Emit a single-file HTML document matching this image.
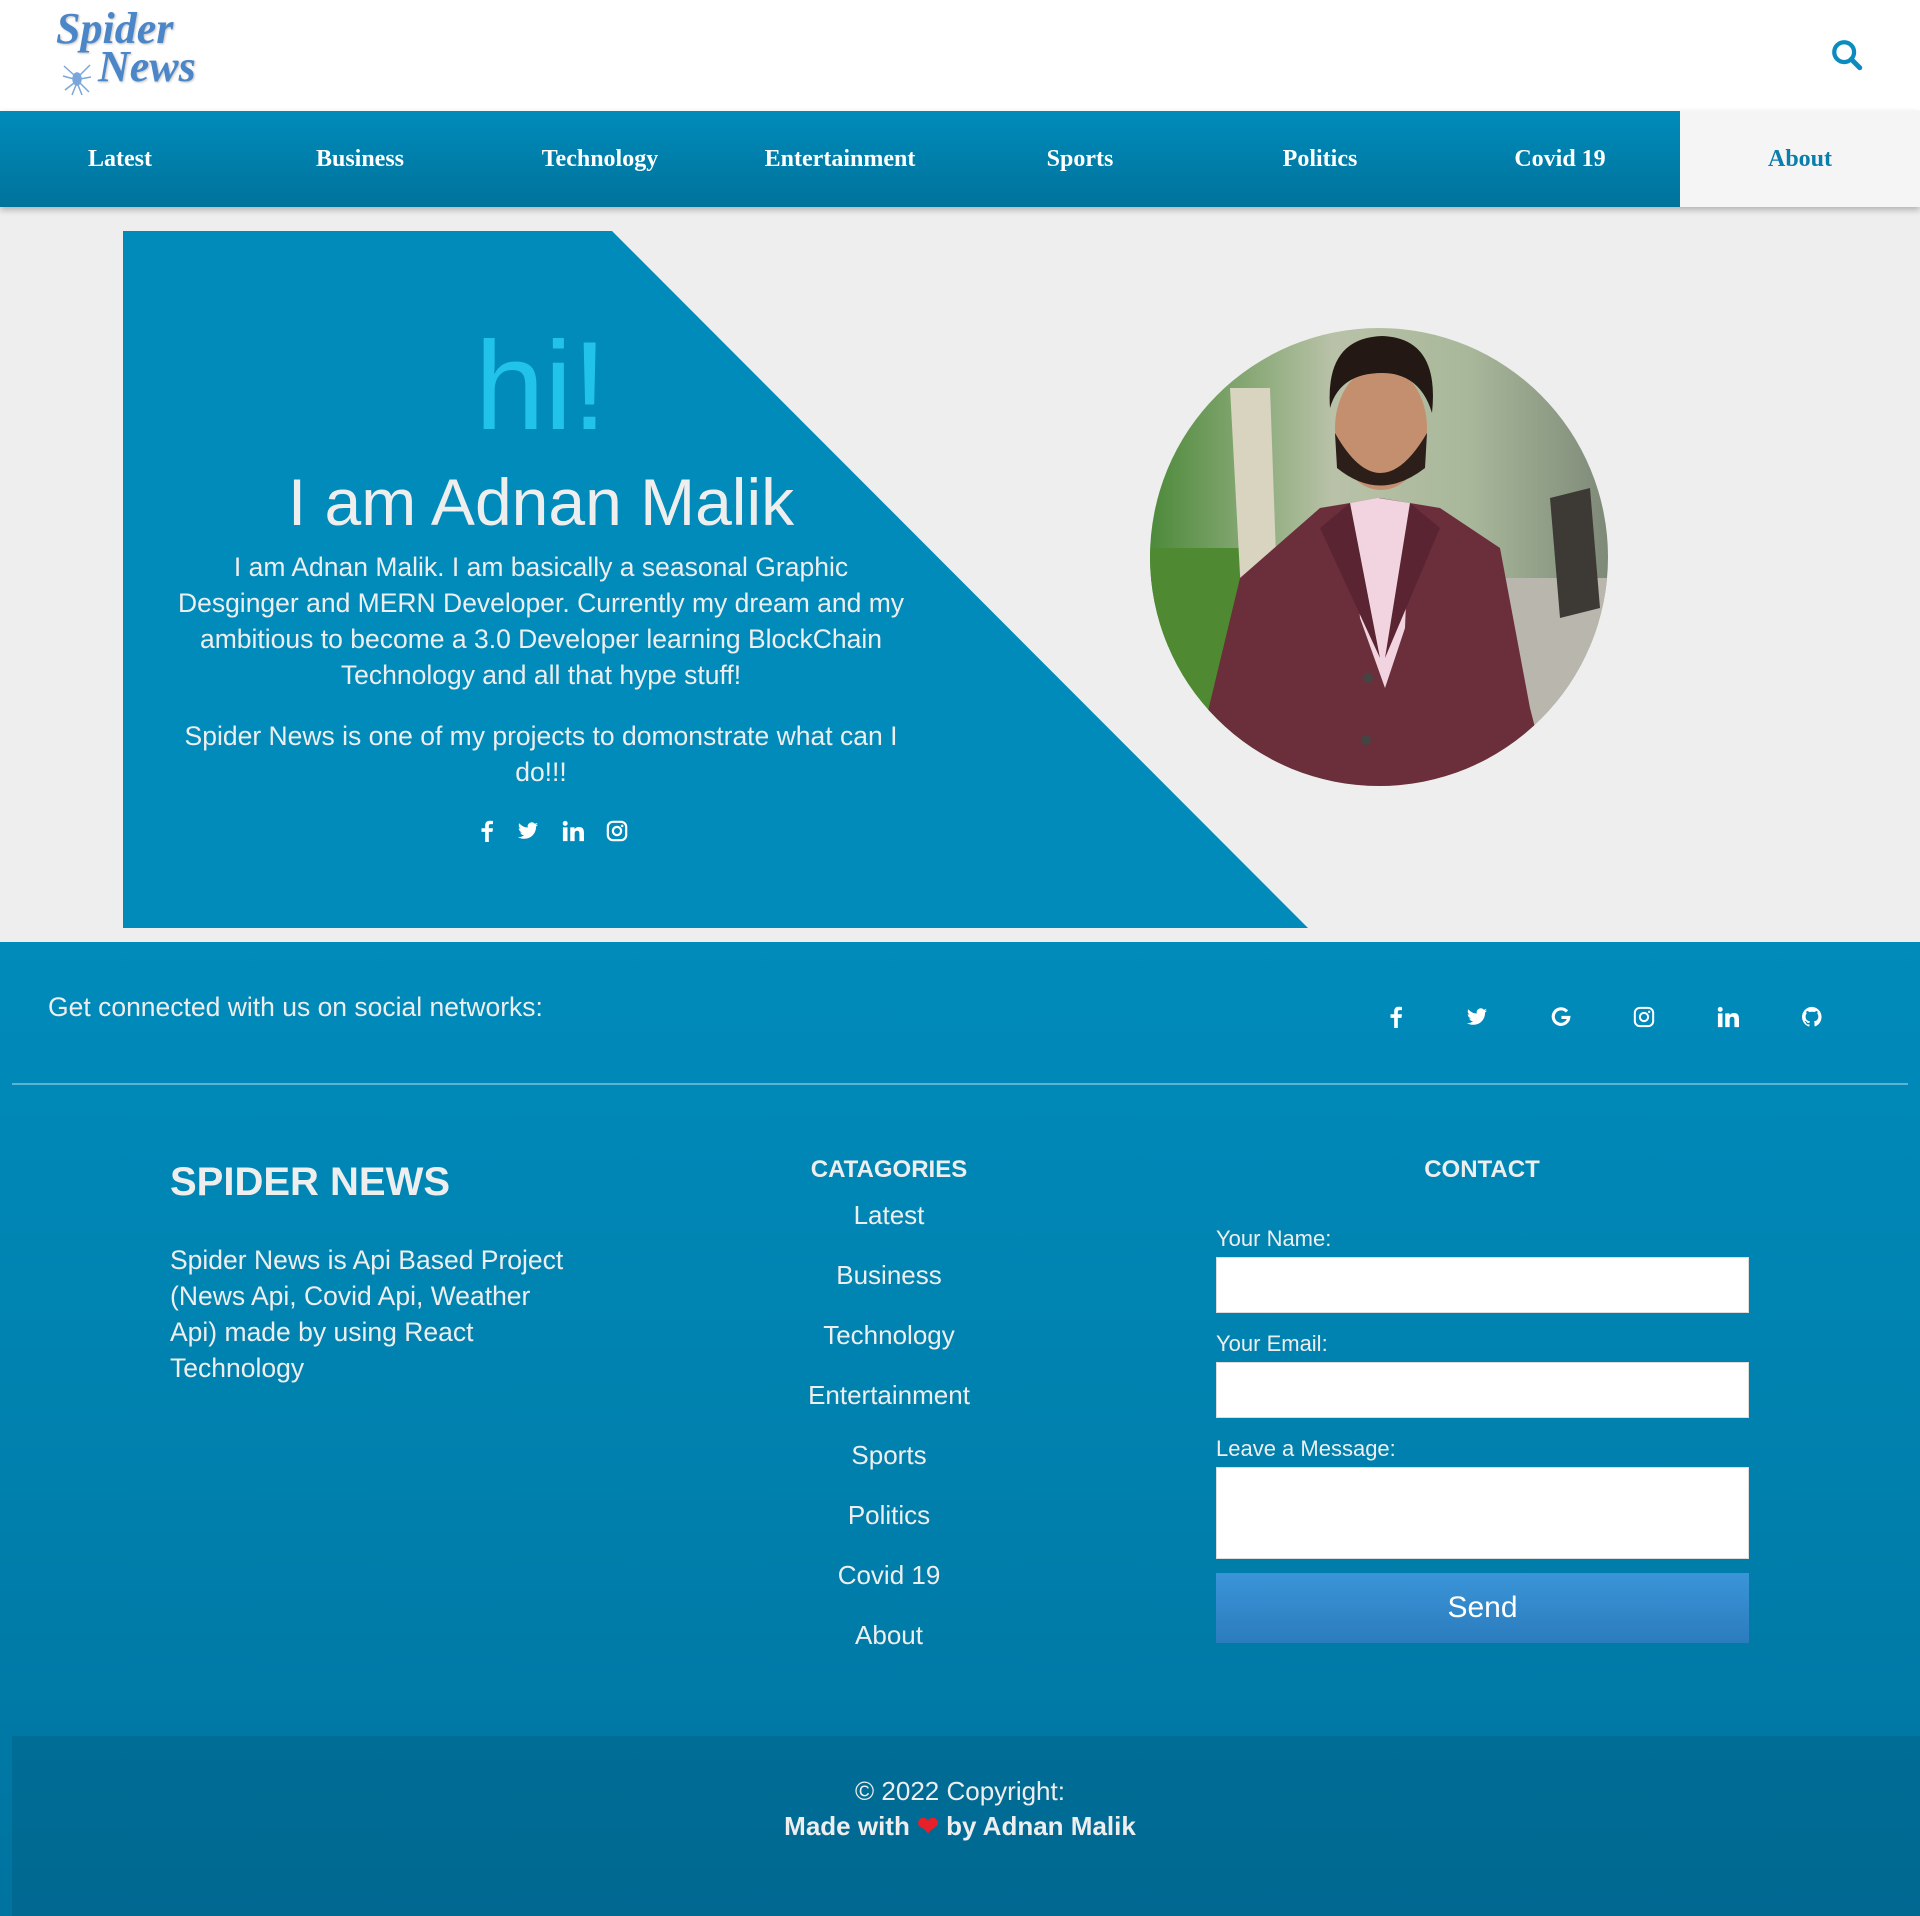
<!DOCTYPE html>
<html><head><meta charset="utf-8"><style>
*{margin:0;padding:0;box-sizing:border-box}
body{width:1920px;height:1916px;position:relative;background:#eee;font-family:"Liberation Sans",sans-serif;overflow:hidden}
.a{position:absolute}
.nav{top:111px;left:0;width:1920px;height:96px;background:linear-gradient(#008bbb,#00739b);box-shadow:0 3px 6px rgba(0,0,0,.25)}
.nav div{position:absolute;top:0;width:240px;height:96px;line-height:96px;text-align:center;color:#fff;font-family:"Liberation Serif",serif;font-weight:bold;font-size:24px}
.c{text-align:center}
.w{color:#eee}
svg.i{position:absolute}
</style></head><body>
<div class="a" style="left:0;top:0;width:1920px;height:111px;background:#fff"></div>
<div class="a" style="left:56px;top:10px;font-family:'Liberation Serif',serif;font-weight:bold;font-style:italic;color:#4a86c8;font-size:44px;line-height:38px;text-shadow:1px 1px 2px rgba(0,0,0,.25)">Spider<br><span style="margin-left:42px">News</span></div>
<svg class="i" style="left:62px;top:62px" width="30" height="34" viewBox="0 0 30 34"><g stroke="#7aa6dc" stroke-width="1.5" fill="none"><ellipse cx="15" cy="17" rx="4" ry="6" fill="#7aa6dc"/><path d="M12 13L2 4M12 17L1 14M12 21L3 28M18 13L28 3M18 17L29 15M18 21L27 30M14 23L10 33M16 23L20 33"/></g></svg>
<svg class="i" style="left:1830px;top:38px" width="34" height="34" viewBox="0 0 24 24"><circle cx="10" cy="10" r="7" stroke="#0a8cc0" stroke-width="3" fill="none"/><path d="M15 15l6 6" stroke="#0a8cc0" stroke-width="3.5" stroke-linecap="round"/></svg>
<div class="a nav">
<div style="left:0">Latest</div><div style="left:240px">Business</div><div style="left:480px">Technology</div><div style="left:720px">Entertainment</div><div style="left:960px">Sports</div><div style="left:1200px">Politics</div><div style="left:1440px">Covid 19</div><div style="left:1680px;background:#f5f5f5;color:#0a7fae">About</div>
</div>
<svg class="a" style="left:0;top:0" width="1920" height="1000"><polygon points="123,231 612,231 1308,928 123,928" fill="#008bbb"/></svg>
<div class="a c" style="left:241px;width:600px;top:324px;font-size:125px;line-height:125px;color:#22c3ea">hi!</div>
<div class="a c" style="left:141px;width:800px;top:466px;font-size:66px;line-height:72px;color:#eee">I am Adnan Malik</div>
<div class="a c w" style="left:121px;width:840px;top:549px;font-size:26.5px;line-height:36px">I am Adnan Malik. I am basically a seasonal Graphic<br>Desginger and MERN Developer. Currently my dream and my<br>ambitious to become a 3.0 Developer learning BlockChain<br>Technology and all that hype stuff!</div>
<div class="a c w" style="left:121px;width:840px;top:718px;font-size:26.5px;line-height:36px">Spider News is one of my projects to domonstrate what can I<br>do!!!</div>
<svg class="i" style="left:476px;top:820px" width="22" height="22" viewBox="0 0 24 24"><path d="M14 24V13h4l.5-4H14V6.5c0-1.2.4-2 2-2h2.5V1c-.5 0-2-.2-3.5-.2-3.4 0-5 2-5 5.4V9H6v4h4v11z" fill="#fff"/></svg>
<svg class="i" style="left:517px;top:820px" width="22" height="22" viewBox="0 0 24 24"><path d="M23 5a9 9 0 0 1-2.6.7A4.6 4.6 0 0 0 22.4 3a9 9 0 0 1-2.9 1.1A4.5 4.5 0 0 0 11.8 8.2 12.8 12.8 0 0 1 2.5 3.5a4.5 4.5 0 0 0 1.4 6 4.5 4.5 0 0 1-2-.6 4.5 4.5 0 0 0 3.6 4.5 4.5 4.5 0 0 1-2 .1 4.5 4.5 0 0 0 4.2 3.1A9 9 0 0 1 1 18.5 12.8 12.8 0 0 0 8 20.5c8.3 0 12.8-6.9 12.8-12.8v-.6A9 9 0 0 0 23 5z" fill="#fff"/></svg>
<svg class="i" style="left:562px;top:820px" width="22" height="22" viewBox="0 0 24 24"><path d="M1 8h5v15H1zM3.5 1a2.7 2.7 0 1 1 0 5.4 2.7 2.7 0 0 1 0-5.4zM9 8h4.7v2.1c.7-1.2 2.3-2.5 4.7-2.5 5 0 5.6 3.2 5.6 7.4V23h-5v-7.3c0-1.8 0-4-2.4-4s-2.8 1.9-2.8 3.9V23H9z" fill="#fff"/></svg>
<svg class="i" style="left:606px;top:820px" width="22" height="22" viewBox="0 0 24 24"><rect x="2" y="2" width="20" height="20" rx="5.5" stroke="#fff" stroke-width="2.4" fill="none"/><circle cx="12" cy="12" r="4.5" stroke="#fff" stroke-width="2.4" fill="none"/><circle cx="17.6" cy="6.4" r="1.4" fill="#fff"/></svg>
<svg class="a" style="left:1150px;top:328px" width="458" height="458" viewBox="0 0 458 458">
<defs><clipPath id="cp"><circle cx="229" cy="229" r="229"/></clipPath><linearGradient id="bg" x1="0" x2="1"><stop offset="0" stop-color="#4d8a3a"/><stop offset=".4" stop-color="#b9c2a8"/><stop offset=".7" stop-color="#a8b79a"/><stop offset="1" stop-color="#7e8a78"/></linearGradient></defs>
<g clip-path="url(#cp)"><rect width="458" height="458" fill="url(#bg)"/>
<rect x="0" y="220" width="110" height="238" fill="#4f8a33"/>
<path d="M80 60 L120 60 L130 340 L95 340Z" fill="#d8d4c0"/>
<path d="M350 250 L458 250 L458 458 L340 458Z" fill="#b9b6ae"/>
<path d="M400 170 L440 160 L450 280 L410 290Z" fill="#3d3a35"/>
<path d="M40 458 L90 250 L170 180 L230 170 L290 180 L350 220 L380 380 L400 458Z" fill="#6b2f3c"/>
<path d="M200 175 L228 170 L260 175 L255 300 L235 360 L210 290Z" fill="#f1d4df"/>
<path d="M200 175 L230 330 L170 200Z" fill="#5a2432"/><path d="M260 175 L235 330 L290 200Z" fill="#5a2432"/>
<ellipse cx="231" cy="100" rx="46" ry="62" fill="#c48f6f"/>
<path d="M185 105 Q230 185 277 105 L275 140 Q230 175 187 140Z" fill="#2c1f1a"/>
<path d="M180 80 Q175 10 232 8 Q290 10 282 85 Q270 45 232 45 Q190 45 180 80Z" fill="#231814"/>
<circle cx="218" cy="350" r="5" fill="#444"/><circle cx="216" cy="412" r="5" fill="#444"/>
</g></svg>
<div class="a" style="left:0;top:942px;width:1920px;height:974px;background:linear-gradient(#008bbb 0%,#0080ad 55%,#0073a0 100%)"></div>
<div class="a w" style="left:48px;top:990px;font-size:26.5px;line-height:34px">Get connected with us on social networks:</div>
<svg class="i" style="left:1385px;top:1006px" width="22" height="22" viewBox="0 0 24 24"><path d="M14 24V13h4l.5-4H14V6.5c0-1.2.4-2 2-2h2.5V1c-.5 0-2-.2-3.5-.2-3.4 0-5 2-5 5.4V9H6v4h4v11z" fill="#fff"/></svg>
<svg class="i" style="left:1466px;top:1006px" width="22" height="22" viewBox="0 0 24 24"><path d="M23 5a9 9 0 0 1-2.6.7A4.6 4.6 0 0 0 22.4 3a9 9 0 0 1-2.9 1.1A4.5 4.5 0 0 0 11.8 8.2 12.8 12.8 0 0 1 2.5 3.5a4.5 4.5 0 0 0 1.4 6 4.5 4.5 0 0 1-2-.6 4.5 4.5 0 0 0 3.6 4.5 4.5 4.5 0 0 1-2 .1 4.5 4.5 0 0 0 4.2 3.1A9 9 0 0 1 1 18.5 12.8 12.8 0 0 0 8 20.5c8.3 0 12.8-6.9 12.8-12.8v-.6A9 9 0 0 0 23 5z" fill="#fff"/></svg>
<svg class="i" style="left:1550px;top:1006px" width="22" height="22" viewBox="0 0 24 24"><path d="M18.5 6A8.5 8.5 0 1 0 20.5 12.5H12.5" stroke="#fff" stroke-width="3.4" fill="none"/></svg>
<svg class="i" style="left:1633px;top:1006px" width="22" height="22" viewBox="0 0 24 24"><rect x="2" y="2" width="20" height="20" rx="5.5" stroke="#fff" stroke-width="2.2" fill="none"/><circle cx="12" cy="12" r="4.5" stroke="#fff" stroke-width="2.2" fill="none"/><circle cx="17.6" cy="6.4" r="1.3" fill="#fff"/></svg>
<svg class="i" style="left:1717px;top:1006px" width="22" height="22" viewBox="0 0 24 24"><path d="M1 8h5v15H1zM3.5 1a2.7 2.7 0 1 1 0 5.4 2.7 2.7 0 0 1 0-5.4zM9 8h4.7v2.1c.7-1.2 2.3-2.5 4.7-2.5 5 0 5.6 3.2 5.6 7.4V23h-5v-7.3c0-1.8 0-4-2.4-4s-2.8 1.9-2.8 3.9V23H9z" fill="#fff"/></svg>
<svg class="i" style="left:1801px;top:1006px" width="22" height="22" viewBox="0 0 24 24"><path d="M12 1a11 11 0 0 0-3.5 21.4c.6.1.7-.2.7-.5v-2c-3 .7-3.700-1.4-3.7-1.4-.5-1.2-1.2-1.6-1.2-1.6-1-.7.1-.7.1-.7 1.1.1 1.7 1.1 1.7 1.1 1 1.7 2.6 1.2 3.2.9.1-.7.4-1.200.7-1.5-2.4-.3-5-1.2-5-5.4 0-1.2.4-2.2 1.1-2.9-.1-.3-.5-1.4.1-2.9 0 0 .9-.3 3 1.1a10.5 10.5 0 0 1 5.5 0c2.1-1.4 3-1.1 3-1.1.6 1.5.2 2.6.1 2.9.7.7 1.1 1.7 1.1 2.9 0 4.2-2.6 5.1-5 5.4.4.3.8 1 .8 2v3c0 .3.2.6.8.5A11 11 0 0 0 12 1z" fill="#fff"/></svg>
<div class="a" style="left:12px;top:1083px;width:1896px;height:2px;background:#5eb3d4"></div>
<div class="a w" style="left:170px;top:1157px;font-size:40px;font-weight:bold;line-height:50px">SPIDER NEWS</div>
<div class="a w" style="left:170px;top:1242px;font-size:26.5px;line-height:36px">Spider News is Api Based Project<br>(News Api, Covid Api, Weather<br>Api) made by using React<br>Technology</div>
<div class="a c w" style="left:739px;width:300px;top:1155px;font-size:24px;font-weight:bold;line-height:30px">CATAGORIES</div>
<div class="a c w" style="left:739px;width:300px;top:1185px;font-size:26px;line-height:60px">Latest<br>Business<br>Technology<br>Entertainment<br>Sports<br>Politics<br>Covid 19<br>About</div>
<div class="a c w" style="left:1332px;width:300px;top:1155px;font-size:24px;font-weight:bold;line-height:30px">CONTACT</div>
<div class="a w" style="left:1216px;top:1226px;font-size:22px;line-height:26px">Your Name:</div>
<div class="a" style="left:1216px;top:1257px;width:533px;height:56px;background:#fff;border:1px solid #ddd"></div>
<div class="a w" style="left:1216px;top:1331px;font-size:22px;line-height:26px">Your Email:</div>
<div class="a" style="left:1216px;top:1362px;width:533px;height:56px;background:#fff;border:1px solid #ddd"></div>
<div class="a w" style="left:1216px;top:1436px;font-size:22px;line-height:26px">Leave a Message:</div>
<div class="a" style="left:1216px;top:1467px;width:533px;height:92px;background:#fff;border:1px solid #ddd"></div>
<div class="a c" style="left:1216px;top:1573px;width:533px;height:70px;line-height:70px;background:linear-gradient(#3a95d8,#2b7cbd);color:#fff;font-size:30px">Send</div>
<div class="a" style="left:12px;top:1736px;width:1908px;height:180px;background:rgba(0,0,0,.09)"></div>
<div class="a c w" style="left:0;width:1920px;top:1773px;font-size:26px;line-height:36px">© 2022 Copyright:</div>
<div class="a c w" style="left:0;width:1920px;top:1808px;font-size:26px;line-height:36px;font-weight:bold">Made with <span style="color:#e8202a">❤</span> by Adnan Malik</div>
</body></html>
